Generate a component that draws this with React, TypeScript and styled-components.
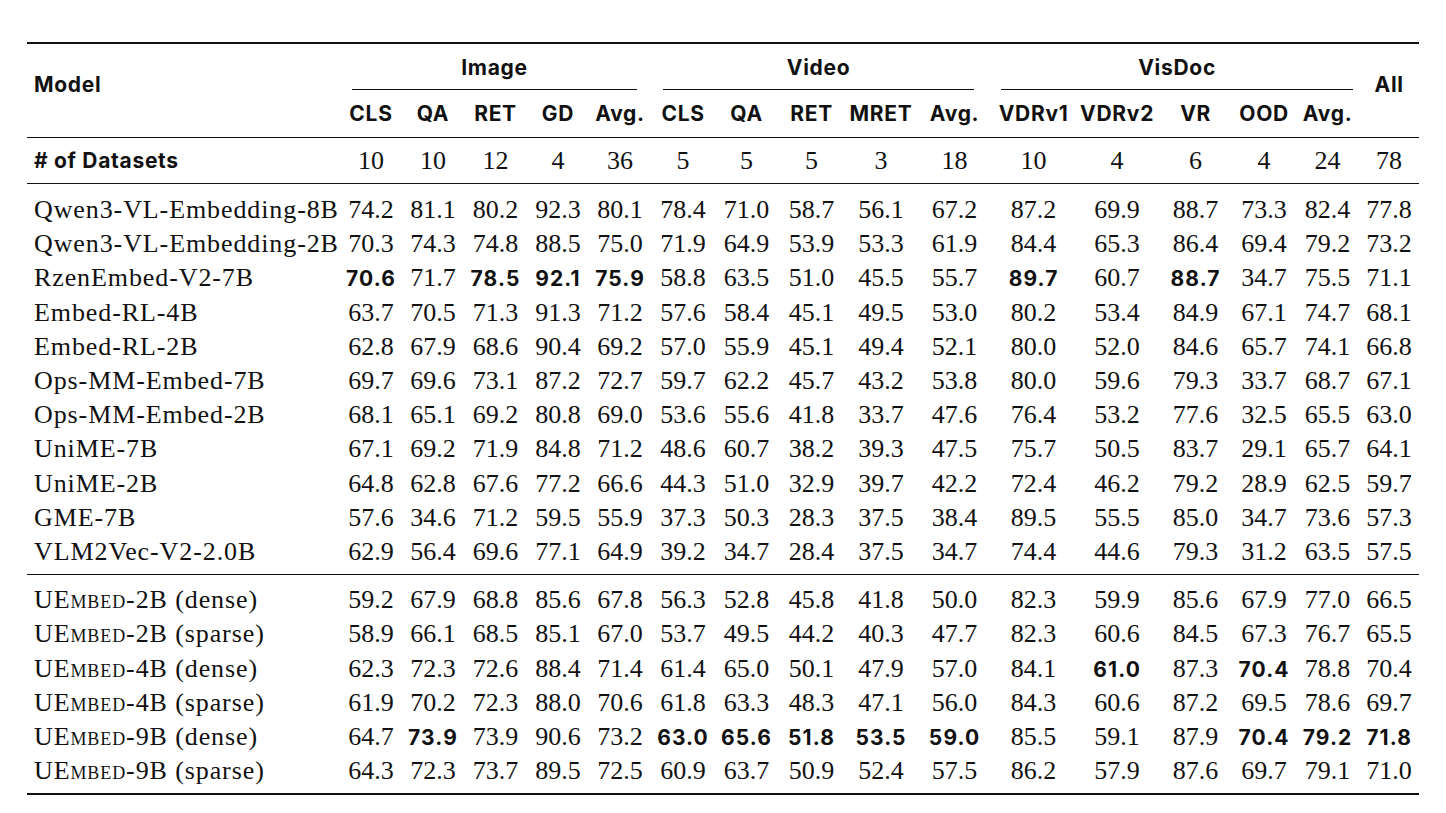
import React from "react";
import styled, { createGlobalStyle } from "styled-components";

const GlobalStyle = createGlobalStyle`
  html, body {
    margin: 0;
    padding: 0;
    background: #ffffff;
  }
  body {
    color: #111;
    font-family: "Liberation Serif", "Times New Roman", serif;
  }
`;

const INK = "#111";
const SANS = `Inter, "Liberation Sans", Arial, sans-serif`;

const Page = styled.div`
  padding: 42px 27px 18px 27px;
`;

const Table = styled.table`
  width: 1392px;
  table-layout: fixed;
  border-collapse: separate;
  border-spacing: 0;
  border-top: 2px solid ${INK};
  border-bottom: 2px solid ${INK};
`;

const Col = styled.col<{ $w: number }>`
  width: ${(p) => p.$w}px;
`;

const HeadCell = styled.th`
  padding: 0;
  font-family: ${SANS};
  font-weight: 700;
  font-size: 21px;
  letter-spacing: 0.7px;
  text-align: center;
  white-space: nowrap;
`;

const SpanHead = styled(HeadCell)<{ $left?: boolean }>`
  text-align: ${(p) => (p.$left ? "left" : "center")};
  padding-left: ${(p) => (p.$left ? "7px" : "0")};
  padding-bottom: 13px;
  vertical-align: middle;
  border-bottom: 1px solid ${INK};
`;

const GroupCell = styled(HeadCell)`
  height: 46px;
  vertical-align: top;
`;

const GroupInner = styled.div<{ $l: number; $r: number }>`
  margin: 0 ${(p) => p.$r}px 0 ${(p) => p.$l}px;
`;

const GroupLabel = styled.div`
  height: 45px;
  line-height: 48px;
`;

const GroupRule = styled.div`
  height: 1px;
  background: ${INK};
`;

const SubHead = styled(HeadCell)`
  height: 47px;
  line-height: 47px;
  border-bottom: 1px solid ${INK};
`;

const CountRow = styled.tr`
  & > td {
    height: 45px;
    line-height: 45px;
    border-bottom: 1px solid ${INK};
  }
`;

const Section = styled.tbody<{ $top: number; $rule?: boolean }>`
  & > tr:first-child > td {
    padding-top: ${(p) => p.$top}px;
  }
  & > tr:last-child > td {
    padding-bottom: 5px;
    border-bottom: ${(p) => (p.$rule ? `1px solid ${INK}` : "none")};
  }
`;

const Cell = styled.td`
  padding: 0;
  font-size: 26px;
  line-height: 34.2px;
  text-align: center;
  white-space: nowrap;
  vertical-align: middle;
`;

const NameCell = styled(Cell)`
  text-align: left;
  padding-left: 7px;
  letter-spacing: 0.9px;
`;

const CountLabel = styled.td`
  padding: 0 0 0 7px;
  font-family: ${SANS};
  font-weight: 700;
  font-size: 21px;
  letter-spacing: 0.7px;
  white-space: nowrap;
`;

const Best = styled.span`
  font-family: ${SANS};
  font-weight: 700;
  font-size: 21px;
  line-height: 1;
  letter-spacing: 1.1px;
`;

const SmallCaps = styled.span`
  font-variant: small-caps;
`;

const widths = [313, 62, 62, 63, 62, 62, 64, 63, 67, 72, 75, 83, 84, 73, 64, 63, 60];

const groups = [
  { label: "Image", l: 12, r: 14, cols: ["CLS", "QA", "RET", "GD", "Avg."] },
  { label: "Video", l: 12, r: 18, cols: ["CLS", "QA", "RET", "MRET", "Avg."] },
  { label: "VisDoc", l: 9, r: 6, cols: ["VDRv1", "VDRv2", "VR", "OOD", "Avg."] },
];

const counts = ["10", "10", "12", "4", "36", "5", "5", "5", "3", "18", "10", "4", "6", "4", "24", "78"];

type Row = { name: React.ReactNode; values: string };

const baselines: Row[] = [
  { name: "Qwen3-VL-Embedding-8B", values: "74.2 81.1 80.2 92.3 80.1 78.4 71.0 58.7 56.1 67.2 87.2 69.9 88.7 73.3 82.4 77.8" },
  { name: "Qwen3-VL-Embedding-2B", values: "70.3 74.3 74.8 88.5 75.0 71.9 64.9 53.9 53.3 61.9 84.4 65.3 86.4 69.4 79.2 73.2" },
  { name: "RzenEmbed-V2-7B", values: "*70.6 71.7 *78.5 *92.1 *75.9 58.8 63.5 51.0 45.5 55.7 *89.7 60.7 *88.7 34.7 75.5 71.1" },
  { name: "Embed-RL-4B", values: "63.7 70.5 71.3 91.3 71.2 57.6 58.4 45.1 49.5 53.0 80.2 53.4 84.9 67.1 74.7 68.1" },
  { name: "Embed-RL-2B", values: "62.8 67.9 68.6 90.4 69.2 57.0 55.9 45.1 49.4 52.1 80.0 52.0 84.6 65.7 74.1 66.8" },
  { name: "Ops-MM-Embed-7B", values: "69.7 69.6 73.1 87.2 72.7 59.7 62.2 45.7 43.2 53.8 80.0 59.6 79.3 33.7 68.7 67.1" },
  { name: "Ops-MM-Embed-2B", values: "68.1 65.1 69.2 80.8 69.0 53.6 55.6 41.8 33.7 47.6 76.4 53.2 77.6 32.5 65.5 63.0" },
  { name: "UniME-7B", values: "67.1 69.2 71.9 84.8 71.2 48.6 60.7 38.2 39.3 47.5 75.7 50.5 83.7 29.1 65.7 64.1" },
  { name: "UniME-2B", values: "64.8 62.8 67.6 77.2 66.6 44.3 51.0 32.9 39.7 42.2 72.4 46.2 79.2 28.9 62.5 59.7" },
  { name: "GME-7B", values: "57.6 34.6 71.2 59.5 55.9 37.3 50.3 28.3 37.5 38.4 89.5 55.5 85.0 34.7 73.6 57.3" },
  { name: "VLM2Vec-V2-2.0B", values: "62.9 56.4 69.6 77.1 64.9 39.2 34.7 28.4 37.5 34.7 74.4 44.6 79.3 31.2 63.5 57.5" },
];

const UEmbed = ({ size, kind }: { size: string; kind: string }) => (
  <>
    U<SmallCaps>Embed</SmallCaps>-{size} ({kind})
  </>
);

const ours: Row[] = [
  { name: <UEmbed size="2B" kind="dense" />, values: "59.2 67.9 68.8 85.6 67.8 56.3 52.8 45.8 41.8 50.0 82.3 59.9 85.6 67.9 77.0 66.5" },
  { name: <UEmbed size="2B" kind="sparse" />, values: "58.9 66.1 68.5 85.1 67.0 53.7 49.5 44.2 40.3 47.7 82.3 60.6 84.5 67.3 76.7 65.5" },
  { name: <UEmbed size="4B" kind="dense" />, values: "62.3 72.3 72.6 88.4 71.4 61.4 65.0 50.1 47.9 57.0 84.1 *61.0 87.3 *70.4 78.8 70.4" },
  { name: <UEmbed size="4B" kind="sparse" />, values: "61.9 70.2 72.3 88.0 70.6 61.8 63.3 48.3 47.1 56.0 84.3 60.6 87.2 69.5 78.6 69.7" },
  { name: <UEmbed size="9B" kind="dense" />, values: "64.7 *73.9 73.9 90.6 73.2 *63.0 *65.6 *51.8 *53.5 *59.0 85.5 59.1 87.9 *70.4 *79.2 *71.8" },
  { name: <UEmbed size="9B" kind="sparse" />, values: "64.3 72.3 73.7 89.5 72.5 60.9 63.7 50.9 52.4 57.5 86.2 57.9 87.6 69.7 79.1 71.0" },
];

const Value = ({ v }: { v: string }) =>
  v.startsWith("*") ? <Best>{v.slice(1)}</Best> : <>{v}</>;

const ResultRow = ({ row }: { row: Row }) => (
  <tr>
    <NameCell>{row.name}</NameCell>
    {row.values.split(" ").map((v, i) => (
      <Cell key={i}>
        <Value v={v} />
      </Cell>
    ))}
  </tr>
);

export default function App() {
  return (
    <Page>
      <GlobalStyle />
      <Table>
        <colgroup>
          {widths.map((w, i) => (
            <Col key={i} $w={w} />
          ))}
        </colgroup>
        <thead>
          <tr>
            <SpanHead rowSpan={2} $left>
              Model
            </SpanHead>
            {groups.map((g) => (
              <GroupCell key={g.label} colSpan={g.cols.length}>
                <GroupInner $l={g.l} $r={g.r}>
                  <GroupLabel>{g.label}</GroupLabel>
                  <GroupRule />
                </GroupInner>
              </GroupCell>
            ))}
            <SpanHead rowSpan={2}>All</SpanHead>
          </tr>
          <tr>
            {groups.flatMap((g) =>
              g.cols.map((c, i) => <SubHead key={g.label + i}>{c}</SubHead>)
            )}
          </tr>
        </thead>
        <tbody>
          <CountRow>
            <CountLabel># of Datasets</CountLabel>
            {counts.map((c, i) => (
              <Cell key={i}>{c}</Cell>
            ))}
          </CountRow>
        </tbody>
        <Section $top={9} $rule>
          {baselines.map((r, i) => (
            <ResultRow key={i} row={r} />
          ))}
        </Section>
        <Section $top={8}>
          {ours.map((r, i) => (
            <ResultRow key={i} row={r} />
          ))}
        </Section>
      </Table>
    </Page>
  );
}
